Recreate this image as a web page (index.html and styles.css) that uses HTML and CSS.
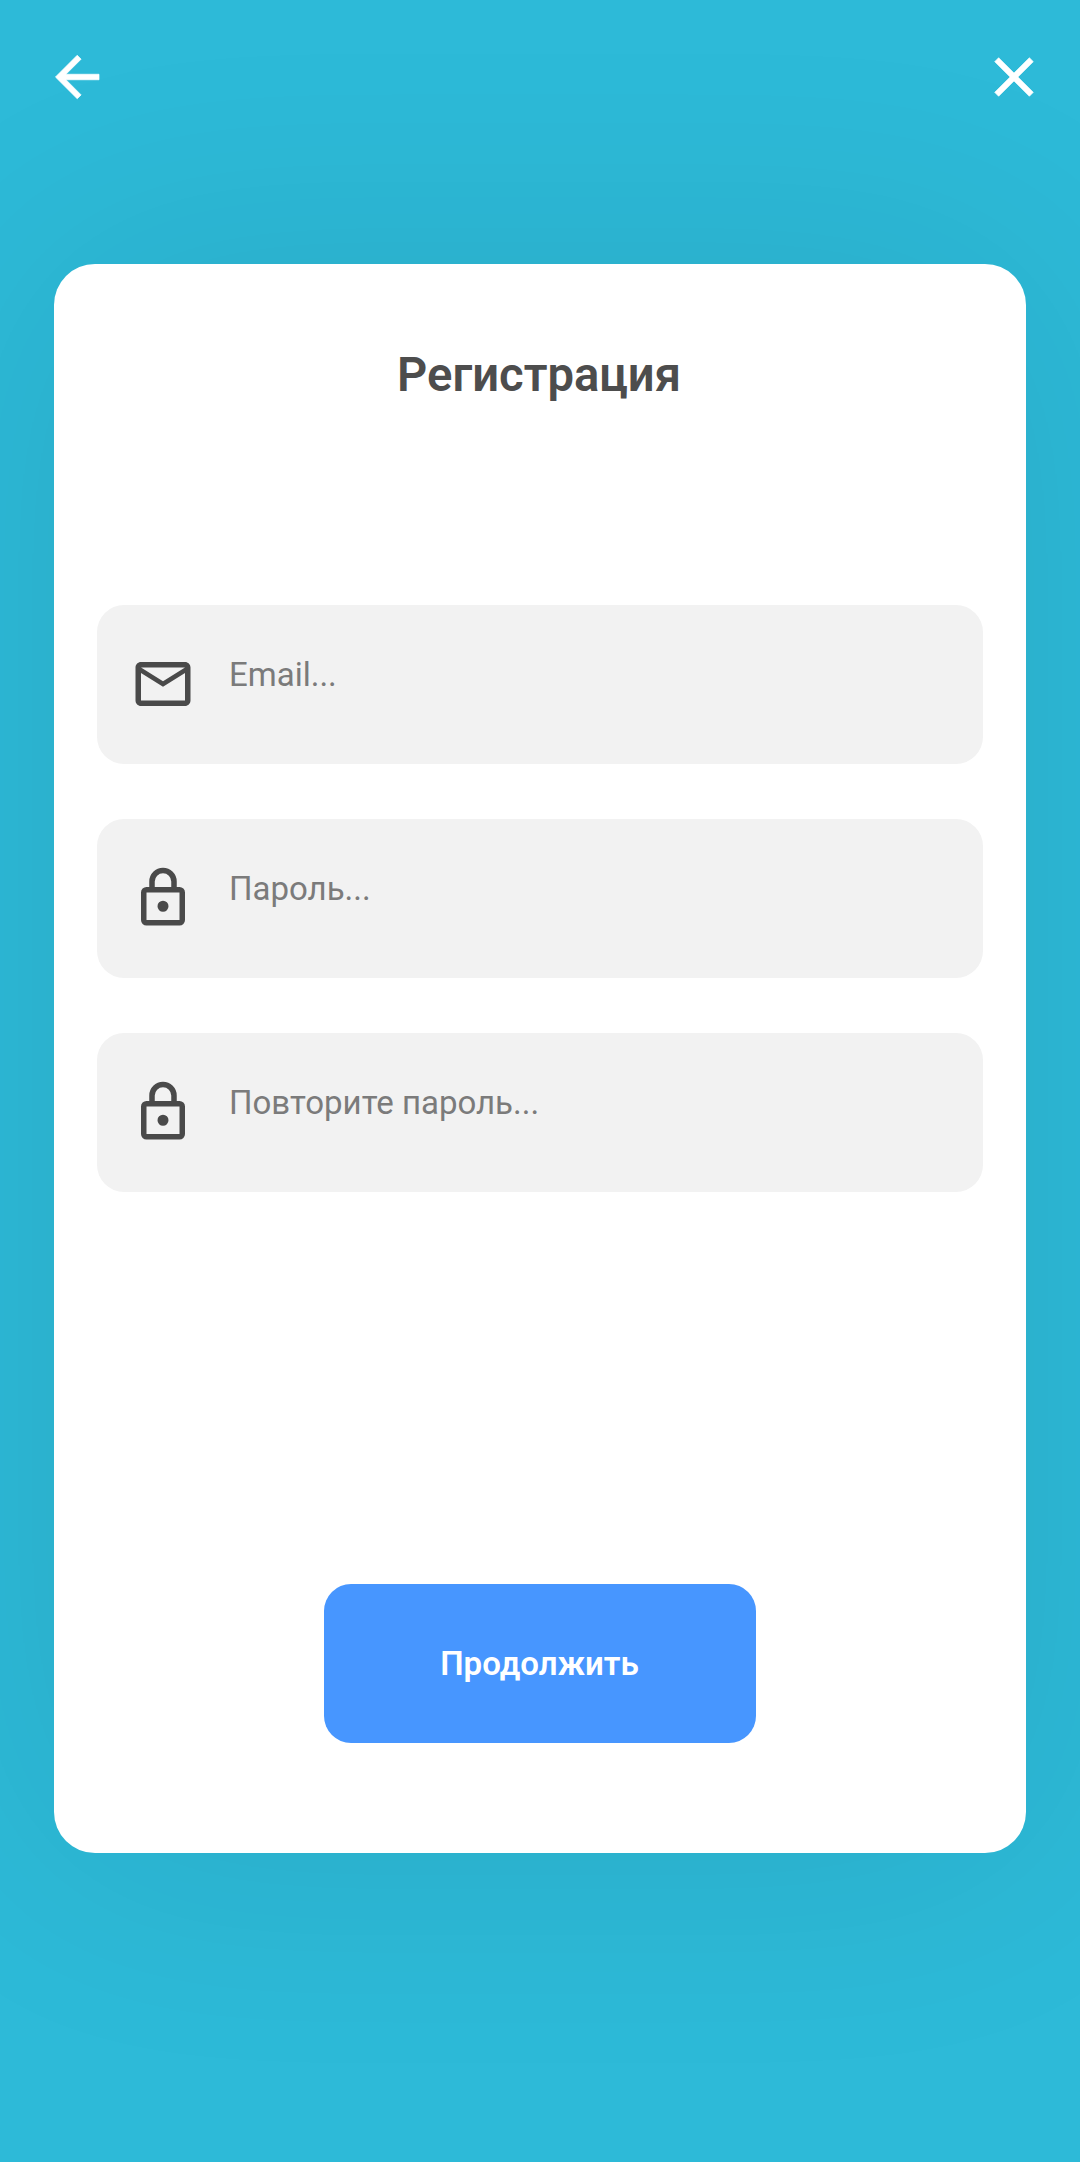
FILE: index.html
```html
<!DOCTYPE html>
<html lang="ru">
<head>
<meta charset="utf-8">
<title>Регистрация</title>
<link rel="stylesheet" href="styles.css">
</head>
<body>
<div class="screen">
  <header class="topbar">
    <svg class="icon icon-light" viewBox="0 0 24 24"><path d="M20 11v2H8l5.5 5.5-1.42 1.42L4.16 12l7.92-7.92L13.5 5.5 8 11h12z"/></svg>
    <svg class="icon icon-light" viewBox="0 0 24 24"><path d="M19 6.41L17.59 5 12 10.59 6.41 5 5 6.41 10.59 12 5 17.59 6.41 19 12 13.41 17.59 19 19 17.59 13.41 12z"/></svg>
  </header>
  <main class="card">
    <h1 class="title">Регистрация</h1>
    <form class="fields">
      <label class="field">
        <svg class="icon" viewBox="0 0 24 24"><path d="M22 6c0-1.1-.9-2-2-2H4c-1.1 0-2 .9-2 2v12c0 1.1.9 2 2 2h16c1.1 0 2-.9 2-2V6zm-2 0l-8 5-8-5h16zm0 12H4V8l8 5 8-5v10z"/></svg>
        <span class="placeholder">Email...</span>
      </label>
      <label class="field">
        <svg class="icon" viewBox="0 0 24 24"><path d="M12 17a2 2 0 1 1 0-4 2 2 0 0 1 0 4m6 3V10H6v10h12m0-12a2 2 0 0 1 2 2v10a2 2 0 0 1-2 2H6a2 2 0 0 1-2-2V10a2 2 0 0 1 2-2h1V6a5 5 0 0 1 10 0v2h1m-6-5a3 3 0 0 0-3 3v2h6V6a3 3 0 0 0-3-3z"/></svg>
        <span class="placeholder">Пароль...</span>
      </label>
      <label class="field">
        <svg class="icon" viewBox="0 0 24 24"><path d="M12 17a2 2 0 1 1 0-4 2 2 0 0 1 0 4m6 3V10H6v10h12m0-12a2 2 0 0 1 2 2v10a2 2 0 0 1-2 2H6a2 2 0 0 1-2-2V10a2 2 0 0 1 2-2h1V6a5 5 0 0 1 10 0v2h1m-6-5a3 3 0 0 0-3 3v2h6V6a3 3 0 0 0-3-3z"/></svg>
        <span class="placeholder">Повторите пароль...</span>
      </label>
    </form>
    <button class="submit" type="button">Продолжить</button>
  </main>
</div>
</body>
</html>
```
FILE: styles.css
```css
* {
  box-sizing: border-box;
}

body {
  margin: 0;
  font-family: Roboto, "Liberation Sans", sans-serif;
  background: #2dbad8;
}

.screen {
  height: 2162px;
  padding: 44px 54px 0;
  overflow: hidden;
}

.topbar {
  display: flex;
  justify-content: space-between;
  height: 220px;
  margin: 0 -21px 0 -10px;
}

.icon {
  flex: none;
  width: 66px;
  height: 66px;
  fill: #4a4a4a;
}

.icon-light {
  position: relative;
  z-index: 1;
  fill: #fff;
  stroke: #fff;
  stroke-width: 0.25;
}

.card {
  display: flex;
  flex-direction: column;
  align-items: center;
  height: 1589px;
  padding: 83px 43px 110px;
  border-radius: 41px;
  background: #fff;
  box-shadow: 0 0 330px rgba(0, 0, 0, 0.09);
}

.title {
  margin: 0;
  padding-right: 2px;
  font-size: 47.2px;
  line-height: 56px;
  font-weight: 600;
  color: #4d4d4d;
}

.fields {
  display: flex;
  flex-direction: column;
  gap: 55px;
  width: 100%;
  margin-top: 202px;
}

.field {
  display: flex;
  align-items: center;
  gap: 33px;
  height: 159px;
  padding: 0 33px 2px;
  border-radius: 27px;
  background: #f2f2f2;
}

.placeholder {
  padding-bottom: 18px;
  font-size: 33px;
  line-height: 39px;
  color: #7b7b7b;
}

.submit {
  width: 432px;
  height: 159px;
  margin-top: auto;
  padding: 0 1px 0 0;
  border: 0;
  border-radius: 27px;
  background: #4796ff;
  font: 600 33px/39px Roboto, "Liberation Sans", sans-serif;
  color: #fff;
}
```
